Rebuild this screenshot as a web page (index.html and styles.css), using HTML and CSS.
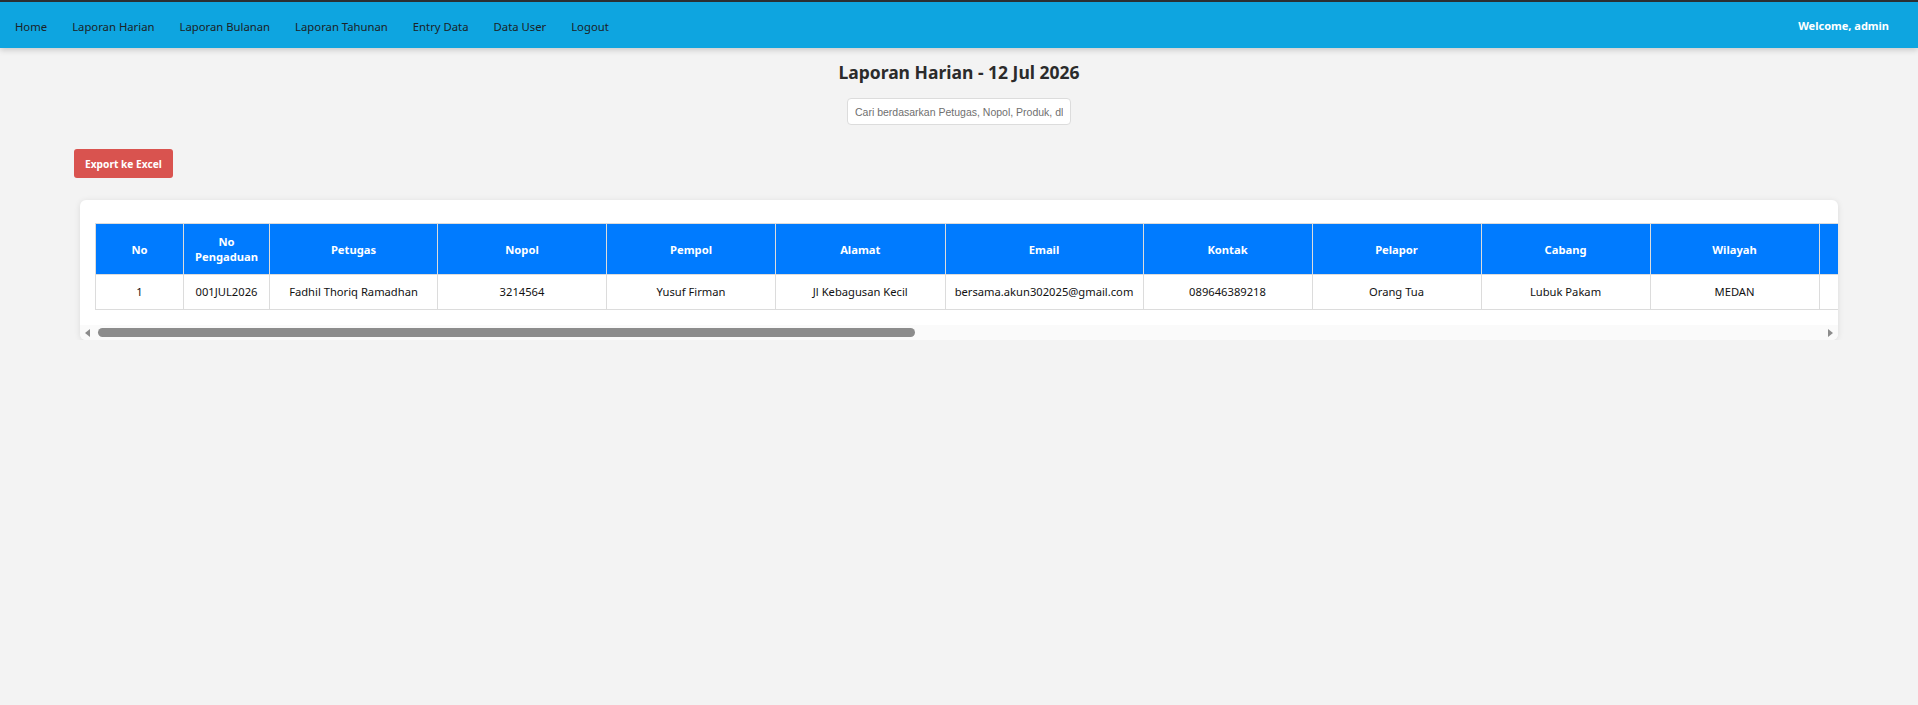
FILE: index.html
```html
<!DOCTYPE html>
<html lang="id">
<head>
    <meta charset="UTF-8">
    <meta name="viewport" content="width=device-width, initial-scale=1.0">
    <title>Laporan Harian</title>
    <link rel="stylesheet" href="styles.css">
</head>
<body>
    <nav class="navbar">
        <ul class="nav-menu">
            <li><a href="#">Home</a></li>
            <li><a href="#">Laporan Harian</a></li>
            <li><a href="#">Laporan Bulanan</a></li>
            <li><a href="#">Laporan Tahunan</a></li>
            <li><a href="#">Entry Data</a></li>
            <li><a href="#">Data User</a></li>
            <li><a href="#">Logout</a></li>
        </ul>
        <div class="welcome">Welcome, admin</div>
    </nav>

    <div class="header">
        <h2>Laporan Harian - 12 Jul 2026</h2>
        <input type="text" class="search" placeholder="Cari berdasarkan Petugas, Nopol, Produk, dll">
    </div>

    <div class="actions">
        <button class="btn-export">Export ke Excel</button>
    </div>

    <div class="card">
        <div class="table-wrap">
            <table class="report">
                <colgroup>
                    <col class="c-no">
                    <col class="c-kode">
                    <col class="c-petugas">
                    <col class="c-std">
                    <col class="c-std">
                    <col class="c-alamat">
                    <col class="c-email">
                    <col class="c-std">
                    <col class="c-std">
                    <col class="c-std">
                    <col class="c-std">
                    <col class="c-std">
                </colgroup>
                <thead>
                    <tr>
                        <th>No</th>
                        <th>No Pengaduan</th>
                        <th>Petugas</th>
                        <th>Nopol</th>
                        <th>Pempol</th>
                        <th>Alamat</th>
                        <th>Email</th>
                        <th>Kontak</th>
                        <th>Pelapor</th>
                        <th>Cabang</th>
                        <th>Wilayah</th>
                        <th></th>
                    </tr>
                </thead>
                <tbody>
                    <tr>
                        <td>1</td>
                        <td>001JUL2026</td>
                        <td>Fadhil Thoriq Ramadhan</td>
                        <td>3214564</td>
                        <td>Yusuf Firman</td>
                        <td>Jl Kebagusan Kecil</td>
                        <td>bersama.akun302025@gmail.com</td>
                        <td>089646389218</td>
                        <td>Orang Tua</td>
                        <td>Lubuk Pakam</td>
                        <td>MEDAN</td>
                        <td></td>
                    </tr>
                </tbody>
            </table>
        </div>
        <div class="scrollbar">
            <span class="sb-arrow sb-left"></span>
            <div class="sb-track"><div class="sb-thumb"></div></div>
            <span class="sb-arrow sb-right"></span>
        </div>
    </div>
</body>
</html>
```

FILE: styles.css
```css
body {
    font-family: 'Noto Sans', 'Open Sans', sans-serif;
    background-color: #f3f3f3;
    color: #212529;
    margin: 0;
}
.navbar {
    display: flex;
    justify-content: space-between;
    align-items: center;
    height: 46px;
    background-color: #0ea5e0;
    border-top: 2px solid #2b2f33;
    box-shadow: 0 2px 6px rgba(0, 0, 0, 0.18);
    padding: 0 29px 0 15px;
}
.nav-menu {
    display: flex;
    gap: 25px;
    list-style: none;
    margin: 0;
    padding: 0;
}
.nav-menu a {
    color: #1c2226;
    text-decoration: none;
    font-size: 11.3px;
}
.welcome {
    color: #fff;
    font-weight: bold;
    font-size: 11px;
}
.header {
    display: flex;
    flex-direction: column;
    align-items: center;
}
.header h2 {
    margin: 11px 0 0;
    font-size: 17.5px;
    line-height: 26px;
    color: #2b2b2b;
}
.search {
    width: 224px;
    height: 27px;
    box-sizing: border-box;
    margin-top: 13px;
    padding: 0 7px;
    border: 1px solid #dcdcdc;
    border-radius: 4px;
    background: #fff;
    font-family: 'Liberation Sans', Arial, sans-serif;
    font-size: 10.5px;
}
.search::placeholder {
    color: #6f6f6f;
}
.actions {
    padding: 24px 0 0 74px;
}
.btn-export {
    height: 29px;
    padding: 0 11px;
    background-color: #d9534f;
    color: #fff;
    border: none;
    border-radius: 3px;
    font-family: 'Noto Sans', sans-serif;
    font-weight: bold;
    font-size: 10.2px;
    cursor: pointer;
}
.card {
    margin: 22px 80px 0;
    background: #fff;
    border-radius: 6px;
    box-shadow: 0 1px 6px rgba(0, 0, 0, 0.1);
    overflow: hidden;
}
.table-wrap {
    padding: 23px 0 15px 15px;
    overflow: hidden;
}
.report {
    table-layout: fixed;
    width: 1892px;
    border-collapse: collapse;
    font-size: 11.2px;
}
.c-no { width: 88px; }
.c-kode { width: 86px; }
.c-petugas { width: 168px; }
.c-alamat { width: 169.5px; }
.c-email { width: 198px; }
.c-std { width: 169px; }
.report th,
.report td {
    border: 1px solid #dcdcdc;
    text-align: center;
    padding: 10px 8px;
}
.report th {
    background-color: #007bff;
    color: #fff;
    font-weight: bold;
    line-height: 15px;
}
.report td {
    line-height: 14px;
    color: #111;
    white-space: nowrap;
    overflow: hidden;
}
.scrollbar {
    display: flex;
    align-items: center;
    height: 15px;
    background: #fafafa;
}
.sb-arrow {
    width: 15px;
    height: 15px;
    display: flex;
    align-items: center;
    justify-content: center;
}
.sb-arrow::before {
    content: '';
    border-top: 4px solid transparent;
    border-bottom: 4px solid transparent;
}
.sb-left::before {
    border-right: 5px solid #8c8c8c;
}
.sb-right::before {
    border-left: 5px solid #8c8c8c;
}
.sb-track {
    flex: 1;
    padding-left: 3px;
}
.sb-thumb {
    width: 817px;
    height: 9px;
    background: #8c8c8c;
    border-radius: 5px;
}
```
